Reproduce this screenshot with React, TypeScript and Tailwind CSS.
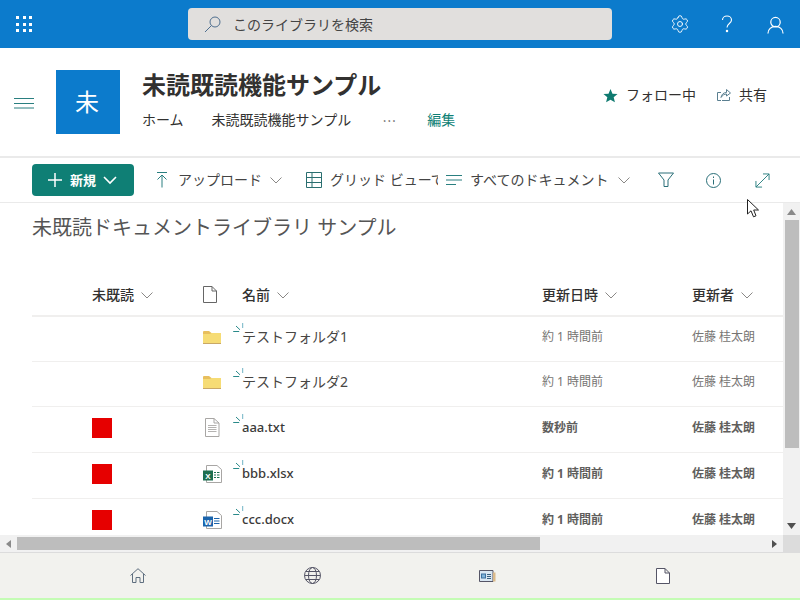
import React from "react";
import { Settings } from "lucide-react";

const Chevron = ({ c = "#8a8886", w = 12 }: { c?: string; w?: number }) => (
  <svg width={w} height={w} viewBox="0 0 12 12" fill="none" stroke={c} strokeWidth="1">
    <path d="M0.5 3.5 L6 9 L11.5 3.5" />
  </svg>
);

const Spark = () => (
  <svg className="absolute left-[-9px] top-[-4px]" width="12" height="10" viewBox="0 0 12 10" fill="none" strokeWidth="1">
    <path d="M0.2 8.5 H6.2" stroke="#2a8a8a" />
    <path d="M3 3 L7 6.8" stroke="#2a8a8a" />
    <path d="M9.7 0 V5" stroke="#6fb3c4" />
  </svg>
);

const FolderIcon = () => (
  <svg width="20" height="16" viewBox="0 0 20 16">
    <path d="M1 3 Q1 2 2 2 H7 L9.5 4 H19 V15 H1 Z" fill="#e8bf5e" />
    <path d="M1 5 H8 L9.5 4 H19 V14.5 H1 Z" fill="#f6dc75" />
    <rect x="1" y="14" width="18" height="1" fill="#c9a866" />
  </svg>
);

const TxtIcon = () => (
  <svg className="ml-[2px]" width="16" height="19" viewBox="0 0 16 19" fill="#fff" stroke="#a8a6a4" strokeWidth="1">
    <path d="M1.5 0.5 H10 L15 5 V18.5 H1.5 Z" />
    <path d="M10 0.5 V5 H15" fill="none" />
    <path d="M4 7.5 H12.5 M4 9.5 H12.5 M4 11.5 H12.5 M4 13.5 H12.5" stroke="#b5b3b1" />
  </svg>
);

const XlsxIcon = () => (
  <svg className="ml-[1px]" width="20" height="18" viewBox="0 0 20 18">
    <path d="M3.5 0.5 H14 L18.5 4.5 V17.5 H3.5 Z" fill="#fff" stroke="#a8a6a4" />
    <rect x="0" y="5.5" width="10" height="10" fill="#1d6f50" />
    <text x="5" y="13.5" textAnchor="middle" fontSize="8" fontWeight="700" fill="#fff" fontFamily="Liberation Sans">X</text>
    <path d="M11 7.5 H13 M14 7.5 H16.5 M11 10 H13 M14 10 H16.5 M11 12.5 H13 M14 12.5 H16.5" stroke="#1d6f50" />
  </svg>
);

const DocxIcon = () => (
  <svg className="ml-[1px]" width="20" height="18" viewBox="0 0 20 18">
    <path d="M3.5 0.5 H14 L18.5 4.5 V17.5 H3.5 Z" fill="#fff" stroke="#a8a6a4" />
    <rect x="0" y="5.5" width="10" height="10" fill="#1b64ac" />
    <text x="5" y="13.5" textAnchor="middle" fontSize="8" fontWeight="700" fill="#fff" fontFamily="Liberation Sans">W</text>
    <path d="M11 7.5 H16.5 M11 10 H16.5 M11 12.5 H16.5" stroke="#1b64ac" />
  </svg>
);

type Row = { red: boolean; icon: React.ReactNode; name: string; date: string; by: string; bold: boolean; h: string };

const rows: Row[] = [
  { red: false, icon: <FolderIcon />, name: "テストフォルダ1", date: "約 1 時間前", by: "佐藤 桂太朗", bold: false, h: "h-[45px] pb-[4px]" },
  { red: false, icon: <FolderIcon />, name: "テストフォルダ2", date: "約 1 時間前", by: "佐藤 桂太朗", bold: false, h: "h-[45px] pb-[4px]" },
  { red: true, icon: <TxtIcon />, name: "aaa.txt", date: "数秒前", by: "佐藤 桂太朗", bold: true, h: "h-[46px] pb-[4px]" },
  { red: true, icon: <XlsxIcon />, name: "bbb.xlsx", date: "約 1 時間前", by: "佐藤 桂太朗", bold: true, h: "h-[46px] pb-[4px]" },
  { red: true, icon: <DocxIcon />, name: "ccc.docx", date: "約 1 時間前", by: "佐藤 桂太朗", bold: true, h: "h-[46px] pb-[4px]" },
];

export default function App() {
  return (
    <div className="relative flex h-[600px] w-[800px] flex-col overflow-hidden bg-white font-['Noto_Sans','Noto_Sans_CJK_JP',sans-serif] text-[#323130]">
      {/* Suite bar */}
      <header className="flex h-12 shrink-0 items-center bg-[#0c7bcc]">
        <div className="ml-4 grid w-4 grid-cols-3 gap-[3.5px]">
          {Array.from({ length: 9 }).map((_, i) => (
            <span key={i} className="h-[3px] w-[3px] bg-white" />
          ))}
        </div>
        <div className="ml-[156px] flex h-8 w-[424px] items-center rounded bg-[#e1dfdd] pl-4 text-sm text-[#444]">
          <svg width="18" height="18" viewBox="0 0 18 18" fill="none" stroke="#4f6f8f" strokeWidth="1">
            <circle cx="11" cy="7" r="5" />
            <path d="M7.5 10.5 L1 17" />
          </svg>
          <span className="ml-[11px] mt-[1px]">このライブラリを検索</span>
        </div>
        <div className="ml-[58px] flex items-center text-white">
          <Settings size={20} strokeWidth={1.1} color="#ffffff" />
          <svg className="ml-[31px]" width="12" height="18" viewBox="0 0 12 18" fill="none" stroke="#fff" strokeWidth="1.1">
            <path d="M1.5 5 C1.5 2.5 3.5 1 6 1 C8.5 1 10.5 2.7 10.5 5 C10.5 8.5 6 8.5 6 12.5" />
            <circle cx="6" cy="16" r="0.7" fill="#fff" />
          </svg>
          <svg className="ml-[34px] mt-[2px]" width="17" height="18" viewBox="0 0 18 18" fill="none" stroke="#fff" strokeWidth="1.3">
            <circle cx="9" cy="6" r="5" />
            <path d="M1 18 C1 13.5 4.5 10.5 9 10.5 C13.5 10.5 17 13.5 17 18" />
          </svg>
        </div>
      </header>

      {/* Site header */}
      <section className="flex h-[110px] shrink-0 border-b-2 border-[#eaeaea]">
        <svg className="ml-[14px] mt-[49px]" width="20" height="12" viewBox="0 0 20 12" stroke="#2a7f80" strokeWidth="1">
          <path d="M0 1.5 H20 M0 6.5 H20 M0 11 H20" />
        </svg>
        <div className="ml-[22px] mt-[22px] flex h-16 w-16 items-center justify-center bg-[#0c7bcc] pr-[2px] text-2xl text-white">未</div>
        <div className="ml-[22px] mt-[19px] flex w-[330px] flex-col">
          <h1 className="text-2xl leading-[36px] font-bold whitespace-nowrap text-[#323130]">未読既読機能サンプル</h1>
          <nav className="mt-[7px] flex text-sm leading-5 whitespace-nowrap">
            <span>ホーム</span>
            <span className="ml-7">未読既読機能サンプル</span>
            <span className="ml-[31px] font-['Noto_Sans_CJK_JP'] text-[#666]">…</span>
            <span className="ml-[31px] text-[#0f7f75]">編集</span>
          </nav>
        </div>
        <div className="ml-[131px] mt-[37px] flex h-5 items-center text-sm whitespace-nowrap">
          <svg width="15" height="15" viewBox="0 0 16 16" fill="#0f7a70">
            <path d="M8 1 L10.1 6 L15.5 6.4 L11.4 9.9 L12.7 15.2 L8 12.4 L3.3 15.2 L4.6 9.9 L0.5 6.4 L5.9 6 Z" />
          </svg>
          <span className="ml-2">フォロー中</span>
          <svg className="ml-[21px]" width="14" height="14" viewBox="0 0 14 14" fill="none" stroke="#5a7f90" strokeWidth="1">
            <path d="M4 12.5 H0.5 V4.5 H4 M12.5 9 V12.5 H5" />
            <path d="M4 9.5 C4.5 6 7 4.5 9.5 4.5 V1.5 L13.5 5 L9.5 8 V6 C7.5 6 5.5 7 4 9.5 Z" />
          </svg>
          <span className="ml-2">共有</span>
        </div>
      </section>

      {/* Command bar */}
      <section className="flex h-[45px] shrink-0 items-center border-b border-[#eaeaea] text-sm text-[#444]">
        <button className="ml-8 flex h-8 w-[102px] items-center rounded-sm bg-[#0f7f75] pl-[16px] text-[13px] font-bold text-white">
          <svg width="14" height="14" viewBox="0 0 14 14" stroke="#fff" strokeWidth="1.5">
            <path d="M7 0 V14 M0 7 H14" />
          </svg>
          <span className="ml-[8px]">新規</span>
          <svg className="ml-[7px]" width="14" height="14" viewBox="0 0 14 14" fill="none" stroke="#fff" strokeWidth="1.6">
            <path d="M1 4 L7 10 L13 4" />
          </svg>
        </button>
        <svg className="ml-[22px]" width="12" height="16" viewBox="0 0 12 16" fill="none" stroke="#2a7f80" strokeWidth="1">
          <path d="M1 0.5 H11 M6 15.5 V3 M1.5 7.5 L6 3 L10.5 7.5" />
        </svg>
        <span className="ml-[10px] whitespace-nowrap">アップロード</span>
        <span className="ml-2"><Chevron /></span>
        <svg className="ml-6" width="16" height="16" viewBox="0 0 16 16" fill="none" stroke="#2a6f70" strokeWidth="1">
          <path d="M0.5 0.5 H15.5 V15.5 H0.5 Z M0.5 5.5 H15.5 M0.5 10.5 H15.5 M6 0.5 V15.5" />
        </svg>
        <span className="ml-2 w-[108px] overflow-hidden whitespace-nowrap">グリッド ビューで編集</span>
        <svg className="ml-[8px]" width="16" height="10" viewBox="0 0 16 10" stroke="#2a7f80" strokeWidth="1">
          <path d="M0 0.5 H16 M0 5 H16 M0 9.5 H10" />
        </svg>
        <span className="ml-[8px] whitespace-nowrap">すべてのドキュメント</span>
        <span className="ml-[10px]"><Chevron /></span>
        <svg className="ml-[28px]" width="16" height="16" viewBox="0 0 16 16" fill="none" stroke="#2a6f78" strokeWidth="1">
          <path d="M0.5 1 H15.5 L10 8 V14.5 H6 V8 Z" />
        </svg>
        <svg className="ml-[32px]" width="15" height="15" viewBox="0 0 15 15" fill="none" stroke="#2a6f78" strokeWidth="1">
          <circle cx="7.5" cy="7.5" r="7" />
          <path d="M7.5 6.5 V11.5 M7.5 3.5 V5" />
        </svg>
        <svg className="ml-[34px]" width="15" height="15" viewBox="0 0 16 16" fill="none" stroke="#2a7f80" strokeWidth="1">
          <path d="M1 15 L15 1 M8.5 1 H15 V7.5 M1 8.5 V15 H7.5" />
        </svg>
      </section>

      {/* Scrollable content */}
      <div className="flex min-h-0 flex-1">
        <main className="min-w-0 flex-1 overflow-hidden pl-8">
          <h2 className="mt-[10px] h-[30px] text-xl leading-[30px] whitespace-nowrap text-[#555]">未既読ドキュメントライブラリ サンプル</h2>
          <div className="mt-[33px] flex h-[41px] items-center border-b-2 border-[#f0efee] pb-[2px] text-sm font-medium text-[#323130]">
            <div className="flex w-[170px] items-center pl-[60px]">
              <span className="whitespace-nowrap">未既読</span>
              <span className="ml-[7px]"><Chevron /></span>
            </div>
            <div className="w-[40px] pl-[1px]">
              <svg width="14" height="17" viewBox="0 0 14 17" fill="#fff" stroke="#666" strokeWidth="1">
                <path d="M0.5 0.5 H9 L13.5 5 V16.5 H0.5 Z M9 0.5 V5 H13.5" />
              </svg>
            </div>
            <div className="flex w-[300px] items-center">
              <span>名前</span>
              <span className="ml-[7px]"><Chevron /></span>
            </div>
            <div className="flex w-[150px] items-center">
              <span>更新日時</span>
              <span className="ml-[7px]"><Chevron /></span>
            </div>
            <div className="flex items-center">
              <span>更新者</span>
              <span className="ml-[7px]"><Chevron /></span>
            </div>
          </div>
          {rows.map((r) => (
            <div key={r.name} className={`flex items-center border-b border-[#f0efee] ${r.h}`}>
              <div className="w-[170px] pl-[60px]">
                {r.red && <div className="h-5 w-5 bg-[#e60000]" />}
              </div>
              <div className="flex w-[40px] justify-start">{r.icon}</div>
              <div className={`relative w-[300px] whitespace-nowrap ${r.bold ? "text-[13px] font-medium text-[#3b3a39]" : "text-sm text-[#484644]"}`}>
                <Spark />
                {r.name}
              </div>
              <div className={`w-[150px] whitespace-nowrap text-xs ${r.bold ? "font-bold text-[#605e5c]" : "text-[#767472]"}`}>{r.date}</div>
              <div className={`whitespace-nowrap text-xs ${r.bold ? "font-bold text-[#605e5c]" : "text-[#767472]"}`}>{r.by}</div>
            </div>
          ))}
        </main>
        {/* Vertical scrollbar */}
        <div className="flex w-[17px] shrink-0 flex-col items-center bg-[#f1f1f1]">
          <svg className="mt-[6px]" width="9" height="6" viewBox="0 0 9 6" fill="#8a8a8a"><path d="M4.5 0 L9 6 H0 Z" /></svg>
          <div className="mt-[5px] h-[228px] w-[14px] bg-[#bdbdbd]" />
          <svg className="mt-auto mb-[6px]" width="9" height="6" viewBox="0 0 9 6" fill="#505050"><path d="M0 0 H9 L4.5 6 Z" /></svg>
        </div>
      </div>

      {/* Horizontal scrollbar */}
      <div className="flex h-[18px] shrink-0 items-center border-b border-[#dcdcdc] bg-[#f1f1f1]">
        <svg className="ml-[6px]" width="5" height="8" viewBox="0 0 5 8" fill="#8a8a8a"><path d="M5 0 V8 L0 4 Z" /></svg>
        <div className="ml-[6px] h-[13px] w-[523px] bg-[#bdbdbd]" />
        <svg className="ml-auto mr-[6px]" width="5" height="8" viewBox="0 0 5 8" fill="#505050"><path d="M0 0 L5 4 L0 8 Z" /></svg>
        <div className="h-full w-[17px] bg-[#dcdcdc]" />
      </div>

      {/* Bottom nav */}
      <nav className="flex h-[47px] shrink-0 items-center border-b-2 border-[#c4fcb4] bg-[#f2f2ee] px-[50px]">
        <div className="flex flex-1 justify-center">
          <svg width="16" height="15" viewBox="0 0 16 15" fill="none" stroke="#5f6f7f" strokeWidth="1">
            <path d="M0.5 7.5 L8 0.7 L15.5 7.5 M2.5 6 V14.5 H6 V9.5 H10 V14.5 H13.5 V6" />
          </svg>
        </div>
        <div className="flex flex-1 justify-center">
          <svg width="17" height="17" viewBox="0 0 17 17" fill="none" stroke="#556" strokeWidth="1">
            <circle cx="8.5" cy="8.5" r="8" />
            <ellipse cx="8.5" cy="8.5" rx="4" ry="8" />
            <path d="M0.5 8.5 H16.5 M1.8 4.5 H15.2 M1.8 12.5 H15.2" />
          </svg>
        </div>
        <div className="flex flex-1 justify-center">
          <svg width="17" height="12" viewBox="0 0 17 12" fill="none" stroke="#556" strokeWidth="1">
            <path d="M0.5 0.5 H14 V11.5 H0.5 Z" fill="#d8e6f2" />
            <rect x="14" y="2.5" width="2.5" height="9" fill="#d9b98a" stroke="none" />
            <rect x="2.5" y="4" width="4" height="4" fill="#7fb2d8" stroke="#3a6f9f" />
            <path d="M8 4.5 H12 M8 6.5 H12 M8 8.5 H12" stroke="#3a5f7f" />
          </svg>
        </div>
        <div className="flex flex-1 justify-center">
          <svg width="14" height="16" viewBox="0 0 14 16" fill="#fff" stroke="#556" strokeWidth="1">
            <path d="M0.5 0.5 H9 L13.5 5 V15.5 H0.5 Z M9 0.5 V5 H13.5" />
          </svg>
        </div>
      </nav>

      {/* Mouse pointer over the page */}
      <svg className="absolute left-[747px] top-[199px]" width="14" height="20" viewBox="0 0 14 20" fill="#fff" stroke="#222" strokeWidth="1">
        <path d="M0.5 0.5 V15 L4 11.8 L6.5 17.8 L9 16.8 L6.7 11 H11.5 Z" />
      </svg>
    </div>
  );
}
